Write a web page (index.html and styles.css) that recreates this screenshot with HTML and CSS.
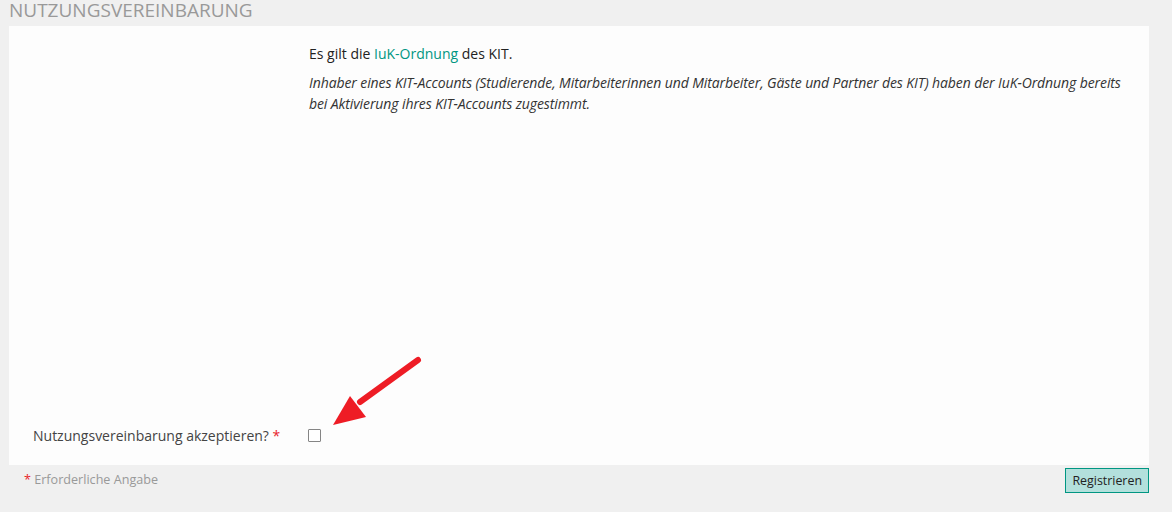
FILE: index.html
```html
<!DOCTYPE html>
<html lang="de">
<head>
<meta charset="utf-8">
<title>Nutzungsvereinbarung</title>
<link rel="stylesheet" href="styles.css">
</head>
<body>
<div class="page">
  <h2 class="section-title">NUTZUNGSVEREINBARUNG</h2>
  <div class="panel">
    <div class="row row-info">
      <div class="label-col"></div>
      <div class="value-col">
        <p class="intro">Es gilt die <a href="#" class="link">IuK-Ordnung</a> des KIT.</p>
        <p class="note">Inhaber eines KIT-Accounts (Studierende, Mitarbeiterinnen und Mitarbeiter, Gäste und Partner des KIT) haben der IuK-Ordnung bereits bei Aktivierung ihres KIT-Accounts zugestimmt.</p>
      </div>
    </div>
    <div class="row row-accept">
      <label class="label-col field-label" for="accept">Nutzungsvereinbarung akzeptieren? <span class="req">*</span></label>
      <div class="value-col">
        <input type="checkbox" id="accept" class="checkbox">
      </div>
    </div>
    <svg class="arrow" width="100" height="80" viewBox="0 0 100 80" aria-hidden="true">
      <line x1="94" y1="15" x2="36" y2="57" stroke="#ee1c25" stroke-width="6" stroke-linecap="round"/>
      <polygon points="9,80 26,51 42,72" fill="#ee1c25"/>
    </svg>
  </div>
  <div class="footer">
    <span class="required-note"><span class="req">*</span> Erforderliche Angabe</span>
    <button type="button" class="btn">Registrieren</button>
  </div>
</div>
</body>
</html>
```
FILE: styles.css
```css
html, body {
  margin: 0;
  padding: 0;
  background: #f0f0f0;
}

body {
  font-family: "Open Sans", "Liberation Sans", sans-serif;
  color: #333;
  font-size: 14px;
}

.page {
  width: 1140px;
  padding-left: 9px;
}

.section-title {
  margin: 0 0 6px 0;
  font-size: 19px;
  line-height: 20px;
  font-weight: 400;
  color: #999;
}

.panel {
  position: relative;
  background: #fdfdfd;
  height: 439px;
  box-sizing: border-box;
  padding: 17px 12px 19px 24px;
  display: flex;
  flex-direction: column;
  justify-content: space-between;
}

.row {
  display: flex;
}

.label-col {
  width: 276px;
  flex: none;
}

.value-col {
  flex: 1;
}

.intro {
  margin: 0 0 8px 0;
  line-height: 21px;
  color: #222;
}

.link {
  color: #009682;
  text-decoration: none;
}

.note {
  margin: 0;
  font-style: italic;
  line-height: 21px;
  letter-spacing: -0.1px;
  color: #333;
}

.row-accept {
  align-items: center;
}

.field-label {
  line-height: 21px;
  color: #444;
}

.req {
  color: #e8242b;
}

.checkbox {
  appearance: none;
  -webkit-appearance: none;
  display: block;
  margin: 0 0 0 -1px;
  width: 13px;
  height: 13px;
  border: 1px solid #858585;
  border-radius: 1px;
  background: #fff;
  box-sizing: border-box;
}

.arrow {
  position: absolute;
  left: 315px;
  top: 319px;
}

.footer {
  display: flex;
  justify-content: space-between;
  align-items: flex-start;
  padding-top: 3px;
}

.required-note {
  margin-left: 15px;
  margin-top: 3px;
  font-size: 12.6px;
  line-height: 17px;
  color: #999;
}

.btn {
  font-family: "Open Sans", "Liberation Sans", sans-serif;
  font-size: 12.4px;
  color: #222;
  background: #b3e0dc;
  border: 1px solid #009682;
  height: 25px;
  padding: 0 6px;
  border-radius: 0;
  line-height: 21px;
}
```
